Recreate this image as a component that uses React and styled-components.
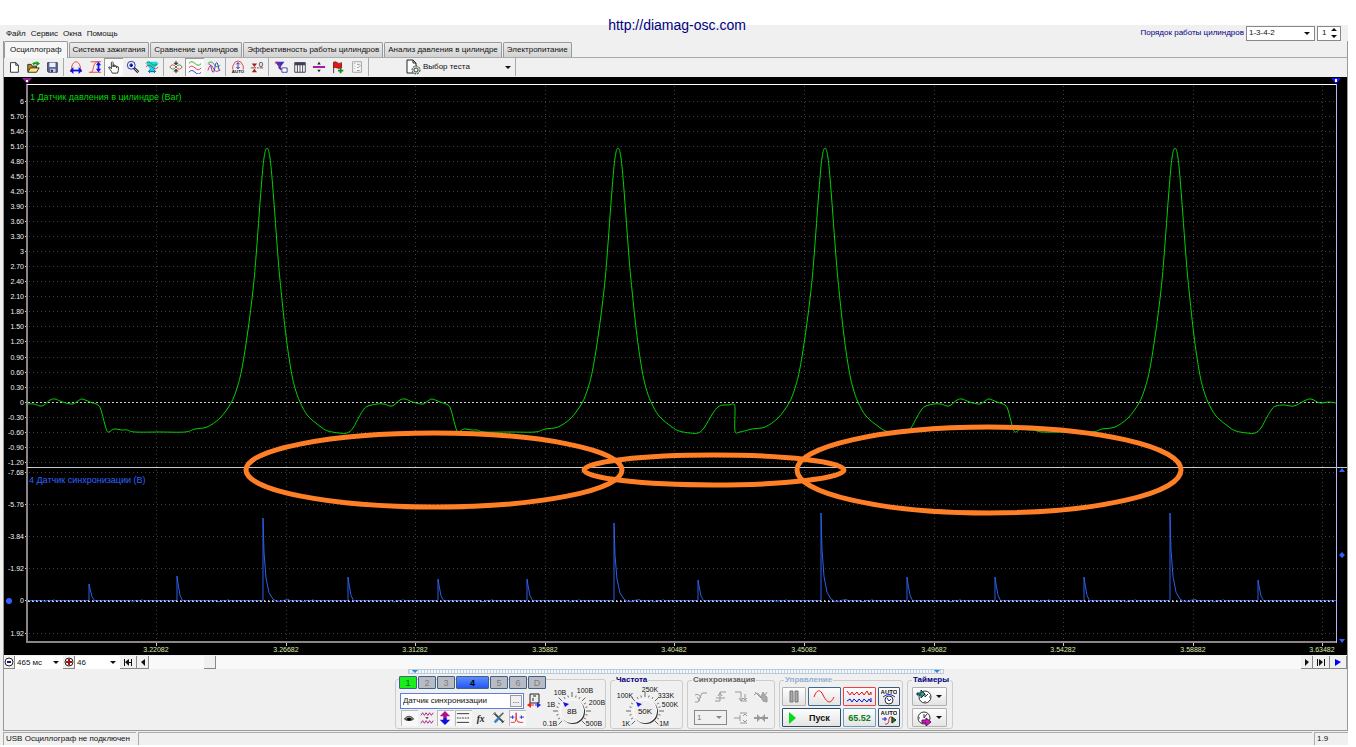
import React, { useState } from 'react';
import styled, { createGlobalStyle, css } from 'styled-components';

// Tabs, menu and axis data
const MENU = ['Файл', 'Сервис', 'Окна', 'Помощь'];

const TABS = [
  'Осциллограф',
  'Система зажигания',
  'Сравнение цилиндров',
  'Эффективность работы цилиндров',
  'Анализ давления в цилиндре',
  'Электропитание',
];

const TOOLS = [
  ['new', 'open', 'save'],
  ['fitX', 'fitY', 'hand', 'zoom', 'snap'],
  ['center', 'split', 'overlay'],
  ['auto', 'zero'],
  ['filter', 'table', 'divider', 'flag', 'report'],
];

const PRESSED = ['hand', 'split'];

const PRESSURE_AXIS = [
  '6', '5.70', '5.40', '5.10', '4.80', '4.50', '4.20', '3.90', '3.60', '3.30', '3', '2.70', '2.40',
  '2.10', '1.80', '1.50', '1.20', '0.90', '0.60', '0.30', '0', '-0.30', '-0.60', '-0.90', '-1.20',
];
const SYNC_AXIS = ['-7.68', '-5.76', '-3.84', '-1.92', '0', '1.92'];
const TIME_AXIS = [
  '3.22082', '3.26682', '3.31282', '3.35882', '3.40482',
  '3.45082', '3.49682', '3.54282', '3.58882', '3.63482',
];

const CHANNELS = ['1', '2', '3', '4', '5', '6', 'D'];
const CHANNEL_TOOLS = ['eye', 'noise', 'invert', 'lines', 'fx', 'tools', 'pulse'];
const CHANNEL_TOOLS_ON = ['eye', 'invert', 'lines', 'pulse'];

// Pressure wave: shape of one compression peak, relative to its top
const PEAK = [
  [-60, 427], [-47, 418], [-36, 403], [-30, 388], [-25, 368], [-19, 330], [-14, 290], [-11, 257],
  [-6, 190], [-3, 158], [0, 148], [3, 158], [6, 190], [11, 257], [14, 290], [19, 336], [24, 370],
  [28, 388], [33, 402], [41, 416], [54, 427], [61, 431], [72, 433], [80, 433], [86, 428], [92, 417],
  [97, 409], [101, 406],
];

// Open valve plateau and the drop after it
const PLATEAU = [
  [27, 404], [34, 404], [40, 406], [44, 405], [50, 400], [55, 399], [60, 401], [66, 403], [73, 404],
  [78, 401], [82, 399], [90, 402], [98, 405], [101, 410], [105, 425], [107, 431], [109, 432],
  [114, 429], [122, 430], [127, 430], [135, 432], [160, 432], [185, 432], [195, 429],
];

const shift = (points, dx) => points.map(([x, y]) => [x + dx, y]);

const PRESSURE = [
  ...PLATEAU,
  ...shift(PEAK, 267),
  ...shift(PLATEAU, 350),
  ...shift(PEAK.slice(0, 25), 618),
  [713, 413], [718, 407], [723, 405], [729, 405], [733, 404], [735, 408], [735, 431], [740, 432], [752, 429],
  ...shift(PEAK, 825),
  ...shift(PLATEAU, 907),
  ...shift(PEAK, 1175),
  [1284, 405], [1294, 406], [1304, 401], [1311, 399], [1320, 403], [1328, 402], [1336, 403],
];

// Catmull-Rom spline through the points
const smooth = (pts) =>
  pts.slice(0, -1).reduce((d, p, i) => {
    const prev = pts[i - 1] || p;
    const next = pts[i + 1];
    const after = pts[i + 2] || next;
    const c1 = [p[0] + (next[0] - prev[0]) / 6, p[1] + (next[1] - prev[1]) / 6];
    const c2 = [next[0] - (after[0] - p[0]) / 6, next[1] - (after[1] - p[1]) / 6];
    return `${d} C${c1} ${c2} ${next}`;
  }, `M${pts[0]}`);

// Ignition pulses: [x, top]
const PULSES = [
  [89, 584], [177, 576], [263, 518], [348, 577], [438, 579], [527, 579], [614, 523],
  [698, 580], [821, 513], [907, 577], [995, 577], [1084, 577], [1170, 513], [1258, 580],
];

const syncPath = () => {
  let d = 'M27 600.5';
  PULSES.forEach(([x, top]) => {
    const h = 600 - top;
    d += ` H${x - 46} l2 1.5 l2 -1.5 h6 l1 -1 l1 1 H${x} V${top}`;
    if (h > 50) {
      d += ` l1 ${h * 0.42} l2 ${h * 0.31} l3 ${h * 0.18} l4 ${h * 0.08} q3 3 8 2 q4 -1.5 8 -1.5 V600.5`;
    } else {
      d += ` l1 ${h * 0.3} l2 ${h * 0.5} l2 ${h * 0.18} V600.5`;
    }
  });
  return `${d} H1336`;
};

// Toolbar and panel drawings on a 16px grid
const ICONS = {
  new: <path d="M4 3h6l3 3v8H4zM10 3v3h3" fill="#fff" stroke="#222" />,
  open: (
    <>
      <path d="M2 13V5h4l1 2h5v6z" fill="#b98b1e" stroke="#222" />
      <path d="M2 14l3-5h10l-3 5z" fill="#ffe680" stroke="#222" />
      <path d="M7 4q3-3 5-1V1l4 3-4 3V5q-2-1-3 1z" fill="#10a010" />
    </>
  ),
  save: (
    <>
      <path d="M3 3h11v11H4l-1-1z" fill="#5a6a9c" stroke="#222e55" />
      <path d="M5 3h7v5H5z" fill="#eef" />
      <path d="M6 10h6v4H6z" fill="#ccd" />
      <path d="M7 11h2v3H7z" fill="#223" />
    </>
  ),
  fitX: (
    <>
      <path d="M1 13h2V8C4 4 6 2 8 2s4 2 5 6v5h2" fill="none" stroke="#e33" />
      <path d="M3 12h10" stroke="#11d" strokeWidth="2" />
      <path d="M5 8v8l-4-4zM11 8v8l4-4z" fill="#11d" />
    </>
  ),
  fitY: (
    <>
      <path d="M1 14h3C7 12 5 2 12 2M3 2h12M3 14h12" fill="none" stroke="#e33" />
      <path d="M12 5v6" stroke="#11d" strokeWidth="2" />
      <path d="M9 6h6l-3-4zM9 10h6l-3 4z" fill="#11d" />
    </>
  ),
  hand: (
    <path
      d="M6 15C5 12 2 10 2 8q1-1 3 2V3q1-2 2 0v5V6q1-1 2 0v2-1q1-1 2 0v2-1q1-1 2 0v4l-1 3z"
      fill="#fff"
      stroke="#222"
    />
  ),
  zoom: (
    <>
      <circle cx="6" cy="6" r="4.5" fill="#dff2ff" stroke="#227" />
      <path d="M6 4v4M4 6h4" stroke="#11a" strokeWidth="2" />
      <path d="M9 9l5 5" stroke="#227" strokeWidth="3" />
      <path d="M10 10l4 4" stroke="#e5d04a" />
    </>
  ),
  snap: (
    <>
      <path d="M2 2h12v4l-3 3H5L2 6zM5 9h6v5H5z" fill="#13dbe4" />
      <path d="M1 4q3-4 6 0t8 0" fill="none" stroke="#168a30" />
      <path d="M1 8q3-4 7 0t7 0" fill="none" stroke="#c33" />
      <path d="M4 13h8M6 11l-2 2 2 2M10 11l2 2-2 2" fill="none" stroke="#159" />
    </>
  ),
  center: (
    <>
      <path d="M1 8q3-5 7 0t7 0" fill="none" stroke="#d33" />
      <path d="M1 8q3 5 7 0t7 0" fill="none" stroke="#283" />
      <path d="M8 1v3M8 12v3" stroke="#222" />
      <path d="M5 3h6L8 6zM5 13h6l-3-3z" fill="#333" />
    </>
  ),
  split: (
    <>
      <path d="M1 4q3-4 7 0t7 0" fill="none" stroke="#1a1" />
      <path d="M1 9q3-4 7 0t7 0" fill="none" stroke="#e22" />
      <path d="M1 14q3-4 7 0t7 0" fill="none" stroke="#22d" />
    </>
  ),
  overlay: (
    <>
      <path d="M1 4q4-4 7 1t7 1" fill="none" stroke="#1a1" />
      <path d="M1 12q3-10 6-3t8 2" fill="none" stroke="#e22" />
      <path d="M2 5c3-2 3 9 5 9S9 3 11 3s2 10 4 9" fill="none" stroke="#22d" />
    </>
  ),
  auto: (
    <>
      <path d="M2 11V7q2-6 6-6t6 6v4" fill="none" stroke="#d33" />
      <path d="M8 3v7M6 5l2-2 2 2M6 8l2 2 2-2" fill="none" stroke="#22a" />
      <text x="8" y="15" fontSize="5" fontWeight="700" textAnchor="middle" fill="#111">AUTO</text>
    </>
  ),
  zero: (
    <>
      <path d="M2 4h6L5 8zM2 14h6l-3-4z" fill="#922" />
      <path d="M1 9h14" stroke="#922" strokeDasharray="6 1 2 1" />
      <text x="10" y="8" fontSize="9" fill="#222">0</text>
    </>
  ),
  filter: (
    <>
      <path d="M1 2h11L8 7v5L5 9V7z" fill="#33c" />
      <path d="M1 4q3-4 5 2t6 6" fill="none" stroke="#e22" />
      <path d="M9 9h6v5H9z" fill="#fff" stroke="#33a" />
    </>
  ),
  table: (
    <>
      <path d="M2 3h12v11H2z" fill="#fff" stroke="#334" />
      <path d="M2 3h12v3H2z" fill="#446" />
      <path d="M5 3v11M8 3v11M11 3v11" stroke="#334" />
    </>
  ),
  divider: (
    <>
      <path d="M1 8h14" stroke="#909" strokeWidth="2" />
      <path d="M6 5h4L8 2zM6 11h4l-2 3z" fill="#222" />
    </>
  ),
  flag: (
    <>
      <path d="M3 2v13" stroke="#333" />
      <path d="M3 3q2-2 4 0t5 0v6q-3 1-5 0t-4 0z" fill="#e11" stroke="#722" />
      <path d="M11 9v6M8 12h6" stroke="#1a8a1a" strokeWidth="2" />
    </>
  ),
  report: (
    <>
      <path d="M3 2h10v12H3z" fill="#f8f8f8" stroke="#999" />
      <path d="M5 4h1M5 7h1M5 10h1M8 5h3M8 8l1 1 3-3M8 12h3" fill="none" stroke="#888" />
    </>
  ),
  test: (
    <>
      <path d="M2 1h6l3 3v10H2z" fill="#fff" stroke="#222" />
      <path d="M8 1v3h3" fill="none" stroke="#222" />
      <circle cx="11" cy="11" r="4" fill="#cfd8c8" stroke="#344" strokeDasharray="2 1" />
      <circle cx="11" cy="11" r="2" fill="#fff" stroke="#344" />
    </>
  ),
  eye: (
    <>
      <path d="M2 9q6-7 12 0-6 5-12 0z" fill="#444" />
      <circle cx="8" cy="9" r="2" fill="#000" />
      <path d="M4 9q4-4 8 0" fill="none" stroke="#bbb" />
    </>
  ),
  noise: (
    <>
      <path d="M1 5l2-3 2 3 2-3 2 3 2-3 2 3 2-3" fill="none" stroke="#a1147f" />
      <path d="M1 14l2-3 2 3 2-3 2 3 2-3 2 3 2-3" fill="none" stroke="#a1147f" />
      <path d="M6 7h4l-2 2z" fill="#222" />
    </>
  ),
  invert: (
    <>
      <path d="M8 0l6 6h-4v2H6V6H2z" fill="#b01090" />
      <path d="M8 16l6-6h-4V8H6v2H2z" fill="#11d" />
    </>
  ),
  lines: (
    <>
      <path d="M1 3h14M1 13h14" stroke="#222" />
      <path d="M1 8h14" stroke="#222" strokeDasharray="2 1" />
    </>
  ),
  fx: (
    <text x="3" y="12" fontSize="11" fontStyle="italic" fontWeight="700" fontFamily="Liberation Serif, serif" fill="#222">
      fx
    </text>
  ),
  tools: (
    <>
      <path d="M3 3l10 10" stroke="#444" strokeWidth="2" />
      <path d="M13 2l-5 5" stroke="#666" strokeWidth="2" />
      <path d="M8 8l-5 5" stroke="#38c" strokeWidth="3" />
      <path d="M1 4l3-3M11 14l3-3" stroke="#444" />
    </>
  ),
  pulse: (
    <>
      <path d="M1 13h4q2 0 2-11 0 11 3 11 0-2 1 0h4" fill="none" stroke="#e22" />
      <path d="M0 7h5M11 7h5M3 5v4M13 5v4" stroke="#22d" />
    </>
  ),
  probe: (
    <>
      <path d="M4 1h9v9H4z" fill="#eee" stroke="#222" />
      <path d="M7 3h3M7 5v3" stroke="#222" />
      <path d="M5 9v6l-4-3z" fill="#e22" />
      <path d="M11 9v6l4-3z" fill="#22d" />
      <path d="M4 12h4" stroke="#e22" />
      <path d="M9 12h3" stroke="#22d" />
    </>
  ),
  edge1: <path d="M2 13h3L9 4h5M2 6q4-2 6 3M4 8l3 4" fill="none" stroke="#999" />,
  edge2: <path d="M2 12h5V3h6M5 7l2-3 2 3M3 9h9" fill="none" stroke="#999" />,
  edge3: <path d="M2 3h6v9h6M6 9l2 3 2-3M12 5v6M10 9l2 2 2-2" fill="none" stroke="#999" />,
  edge4: (
    <>
      <path d="M1 6q4-4 6 1t7-4M2 3l6 6" fill="none" stroke="#999" />
      <path d="M8 8l2-5 2 4 2 1v5l-4-1z" fill="#aaa" stroke="#999" />
    </>
  ),
  level: <path d="M1 8h6M7 3h7M7 13h7M7 5v6M10 6l2-2 2 2M10 10l2 2 2-2" fill="none" stroke="#999" />,
  sides: (
    <>
      <path d="M1 8h14" stroke="#999" strokeWidth="2" />
      <path d="M4 4l4 4-4 4zM12 4L8 8l4 4z" fill="#999" />
    </>
  ),
  autoDial: (
    <>
      <text x="8" y="5" fontSize="6" fontWeight="700" textAnchor="middle" fill="#111">AUTO</text>
      <circle cx="8" cy="11" r="4" fill="#fff" stroke="#333" />
      <path d="M2 8q6-5 12 0M6 9l2 3 2-2" fill="none" stroke="#22c" />
    </>
  ),
  autoSync: (
    <>
      <text x="8" y="5" fontSize="6" fontWeight="700" textAnchor="middle" fill="#111">AUTO</text>
      <path d="M4 14q4 1 4-5 0-3 3-2v6" fill="none" stroke="#c33" />
      <path d="M1 9h5M4 7v4" stroke="#22c" />
      <path d="M11 7l4 3-4 3z" fill="#181" stroke="#222" />
    </>
  ),
  timerIn: (
    <>
      <circle cx="9" cy="8" r="6" fill="#fff" stroke="#333" />
      <path d="M9 8l3-3M9 8V5M13 8h1M9 12v1" stroke="#333" />
      <path d="M1 4h4V1l4 4-4 4V6H1z" fill="#2aa08a" stroke="#134" />
    </>
  ),
  timerOut: (
    <>
      <circle cx="8" cy="8" r="6" fill="#fff" stroke="#333" />
      <path d="M8 8l3-4M8 8V4M3 8h1" stroke="#333" />
      <path d="M6 10h4V8l5 4-5 4v-3H6z" fill="#d018c0" stroke="#515" />
    </>
  ),
};

const Icon = ({ name, size = 16 }) => (
  <svg width={size} height={size} viewBox="0 0 16 16" aria-hidden="true">
    {ICONS[name]}
  </svg>
);

// Oscilloscope screen
const Plot = () => {
  const rowY = (i) => Math.round(101 + i * 15.03);
  const syncY = (i) => Math.round(472 + i * 32.1);
  const colX = (i) => Math.round(156 + i * 129.6);

  return (
    <Screen viewBox="4 77 1343 578" role="img" aria-label="Осциллограмма">
      <rect x="4" y="77" width="1343" height="578" fill="#000" />

      {/* Grid */}
      <g stroke="#404040" strokeDasharray="1 3" shapeRendering="crispEdges">
        {PRESSURE_AXIS.map((v, i) => (
          <path key={v} d={`M29 ${rowY(i) + 0.5}H1335`} />
        ))}
        {SYNC_AXIS.map((v, i) => (
          <path key={v} d={`M29 ${syncY(i) + 0.5}H1335`} />
        ))}
        {TIME_AXIS.map((v, i) => (
          <path key={v} d={`M${colX(i) + 0.5} 86V642`} />
        ))}
      </g>
      <path d="M28 402.5H1335M28 601.5H1335" stroke="#ccc" strokeDasharray="2 2" shapeRendering="crispEdges" />

      {/* Axis labels */}
      <g fontSize="7" fill="#f0f0f0" textAnchor="end">
        {PRESSURE_AXIS.map((v, i) => (
          <text key={v} x="24" y={rowY(i) + 3}>{v}</text>
        ))}
        {SYNC_AXIS.map((v, i) => (
          <text key={v} x="24" y={syncY(i) + 3}>{v}</text>
        ))}
      </g>
      <g fontSize="7" fill="#dfe8b0" textAnchor="middle">
        {TIME_AXIS.map((v, i) => (
          <text key={v} x={colX(i)} y="652">{v}</text>
        ))}
      </g>
      <g stroke="#ccc" shapeRendering="crispEdges">
        {PRESSURE_AXIS.map((v, i) => (
          <path key={v} d={`M25 ${rowY(i) + 0.5}h3`} />
        ))}
        {SYNC_AXIS.map((v, i) => (
          <path key={v} d={`M25 ${syncY(i) + 0.5}h3`} />
        ))}
        {TIME_AXIS.map((v, i) => (
          <path key={v} d={`M${colX(i) + 0.5} 643v3`} />
        ))}
      </g>

      {/* Frame */}
      <path d="M27 84V642H1336" fill="none" stroke="#8a8488" strokeWidth="2" />
      <path d="M27 84.5H1336" stroke="#fff" />
      <path d="M27 467.5H1347" stroke="#c8c8c8" />
      <path d="M1336.5 84V643" stroke="#b9b0ff" />
      <path d="M22 78h10l-5 6z" fill="#8a2090" />
      <path d="M26 80h2v2h-2z" fill="#fff" />
      <path d="M1331 78h10l-5 6z" fill="#1414ff" />
      <path d="M1335 79h2v3h-2z" fill="#fff" />
      <circle cx="9" cy="601" r="3" fill="#2f63ff" />
      <path d="M1339 472h6l-3-4zM1339 639h6l-3 4zM1339 555l3-3 3 3-3 3z" fill="#2f63ff" />

      {/* Signals */}
      <path d={syncPath()} fill="none" stroke="#2d5fe8" />
      <path d="M28 600.5H1335" stroke="#9db8ff" strokeDasharray="1 3" shapeRendering="crispEdges" />
      <path d={smooth(PRESSURE)} fill="none" stroke="#00d400" />
      <text x="30" y="100" fontSize="9" fill="#00d800">1 Датчик давления в цилиндре (Bar)</text>
      <text x="29" y="483" fontSize="9" fill="#2f63ff">4 Датчик синхронизации (В)</text>

      {/* Highlighted intervals */}
      <g fill="none" stroke="#ff7f27" strokeWidth="5">
        <ellipse cx="434" cy="470" rx="188" ry="37" />
        <ellipse cx="714" cy="470" rx="130" ry="15" />
        <ellipse cx="989" cy="470" rx="192" ry="43" />
      </g>
    </Screen>
  );
};

// Rotary knob with scale marks; labels are [text, x, y]
const Dial = ({ box, cx, cy, value, labels, name }) => {
  const [, , width, height] = box.split(' ');
  const marks = Array.from({ length: 19 }, (_, i) => ((135 + i * 15) * Math.PI) / 180);
  return (
    <DialSvg width={width} height={height} viewBox={box} role="img" aria-label={name}>
      <g stroke="#666">
        {marks.map((a, i) => {
          const end = i % 3 ? 16 : 19;
          return (
            <path
              key={a}
              d={`M${cx + Math.cos(a) * 14} ${cy + Math.sin(a) * 14}L${cx + Math.cos(a) * end} ${cy + Math.sin(a) * end}`}
            />
          );
        })}
      </g>
      <circle cx={cx + 1} cy={cy + 1} r="12" fill="#333" />
      <circle cx={cx} cy={cy} r="12" fill="#fff" />
      <circle cx={cx} cy={cy} r="11" fill="#eee" />
      <path d={`M${cx - 9} ${cy - 9}l6 2-4 3z`} fill="#11e" />
      <text x={cx} y={cy + 3} fontSize="8" textAnchor="middle" fill="#111">{value}</text>
      {labels.map(([text, x, y]) => (
        <text key={text} x={x} y={y + 3} fontSize="7" textAnchor="middle" fill="#111">{text}</text>
      ))}
    </DialSvg>
  );
};

const App = () => {
  const [tab, setTab] = useState(0);
  const [channel, setChannel] = useState('4');

  return (
    <>
      <GlobalStyle />
      <SiteBar>
        <a href="http://diamag-osc.com">http://diamag-osc.com</a>
      </SiteBar>
      <Window>
        <MenuBar>
          <nav>
            {MENU.map((item) => (
              <button key={item} type="button">{item}</button>
            ))}
          </nav>
          <FiringOrder>
            <label htmlFor="order">Порядок работы цилиндров</label>
            <SelectBox $width={69} $border>
              <select id="order" defaultValue="1-3-4-2">
                <option>1-3-4-2</option>
              </select>
            </SelectBox>
            <Spinner>
              <input type="number" defaultValue="1" aria-label="Номер цилиндра" />
              <svg width="8" height="12" viewBox="0 0 8 12" aria-hidden="true">
                <path d="M1 4h6L4 1zM1 8h6l-3 3z" fill="#111" />
              </svg>
            </Spinner>
          </FiringOrder>
        </MenuBar>

        <Body>
          <TabBar role="tablist">
            {TABS.map((title, i) => (
              <Tab key={title} type="button" role="tab" aria-selected={i === tab} $active={i === tab} onClick={() => setTab(i)}>
                {title}
              </Tab>
            ))}
          </TabBar>

          <ToolBar>
            {TOOLS.map((group) => (
              <ToolGroup key={group[0]}>
                {group.map((name) => (
                  <ToolButton key={name} type="button" aria-label={name} $pressed={PRESSED.includes(name)}>
                    <Icon name={name} size={14} />
                  </ToolButton>
                ))}
              </ToolGroup>
            ))}
            <TestPicker type="button">
              <Icon name="test" />
              <span>Выбор теста</span>
              <Caret />
            </TestPicker>
          </ToolBar>

          <Plot />

          {/* Time scale and scrolling */}
          <ScrollRow>
            <FlatButton type="button" aria-label="Сжать" $width={11}>
              <svg width="10" height="10" viewBox="0 0 10 10">
                <circle cx="5" cy="5" r="4" fill="#fff" stroke="#222" />
                <path d="M3 5h4" stroke="#118" strokeWidth="2" />
              </svg>
            </FlatButton>
            <SelectBox $width={48}>
              <select aria-label="Развертка" defaultValue="465 мс">
                <option>465 мс</option>
              </select>
            </SelectBox>
            <FlatButton type="button" aria-label="Растянуть" $width={12}>
              <svg width="10" height="10" viewBox="0 0 10 10">
                <circle cx="5" cy="5" r="4" fill="#fff" stroke="#222" />
                <path d="M2 5h6M5 2v6" stroke="#a11" strokeWidth="2" />
              </svg>
            </FlatButton>
            <SelectBox $width={45}>
              <select aria-label="Масштаб" defaultValue="46">
                <option>46</option>
              </select>
            </SelectBox>
            <FlatButton type="button" aria-label="В начало" $width={17}>
              <svg width="8" height="7" viewBox="0 0 8 7"><path d="M0 0h1v7H0zM5 0v7L1 3zM5 3h2v1H5zM7 0h1v7H7z" fill="#111" /></svg>
            </FlatButton>
            <FlatButton type="button" aria-label="Назад" $width={12}>
              <svg width="4" height="7" viewBox="0 0 4 7"><path d="M4 0v7L0 3z" fill="#111" /></svg>
            </FlatButton>
            <TimeSlider type="range" min="0" max="1139" defaultValue="55" aria-label="Положение" />
            <FlatButton type="button" aria-label="Вперед" $width={12}>
              <svg width="4" height="7" viewBox="0 0 4 7"><path d="M0 0v7l4-4z" fill="#111" /></svg>
            </FlatButton>
            <FlatButton type="button" aria-label="В конец" $width={17}>
              <svg width="8" height="7" viewBox="0 0 8 7"><path d="M0 0h1v7H0zM2 0v7l4-4zM7 0h1v7H7z" fill="#111" /></svg>
            </FlatButton>
            <FlatButton type="button" aria-label="Следить" $width={17}>
              <svg width="7" height="7" viewBox="0 0 7 7"><path d="M0 0v7l6-4z" fill="#00f" /></svg>
            </FlatButton>
          </ScrollRow>

          <Splitter>
            <Caret $blue />
            <Caret $blue />
          </Splitter>

          <Controls>
            <ChannelPanel>
              <ChannelColumn>
                <ChannelRow>
                  {CHANNELS.map((c) => (
                    <ChannelButton key={c} type="button" $on={c === '1'} $current={c === channel} onClick={() => setChannel(c)}>
                      {c}
                    </ChannelButton>
                  ))}
                </ChannelRow>
                <NameRow>
                  <NameField>
                    <input type="text" defaultValue="Датчик синхронизации" aria-label="Датчик" />
                    <button type="button">...</button>
                  </NameField>
                  <Icon name="probe" />
                </NameRow>
                <ChannelTools>
                  {CHANNEL_TOOLS.map((name) => (
                    <ChannelTool key={name} type="button" aria-label={name} $on={CHANNEL_TOOLS_ON.includes(name)}>
                      <Icon name={name} size={14} />
                    </ChannelTool>
                  ))}
                </ChannelTools>
              </ChannelColumn>
              <Dial
                box="547 680 59 46"
                cx={573}
                cy={711}
                value="8В"
                name="Чувствительность"
                labels={[['10В', 561, 692], ['100В', 586, 690], ['1В', 552, 704], ['200В', 598, 702], ['0.1В', 551, 723], ['500В', 595, 723]]}
              />
            </ChannelPanel>

            <Group $color="#000080">
              <legend>Частота</legend>
              <Dial
                box="614 687 67 40"
                cx={646}
                cy={711}
                value="50K"
                name="Частота"
                labels={[['250K', 651, 689], ['100K', 626, 695], ['333K', 667, 695], ['500K', 671, 704], ['1K', 627, 723], ['1M', 665, 723]]}
              />
            </Group>

            <Group $color="#606060">
              <legend>Синхронизация</legend>
              <SyncGrid>
                {['edge1', 'edge2', 'edge3', 'edge4'].map((name) => (
                  <SyncButton key={name} type="button" disabled aria-label={name}>
                    <Icon name={name} />
                  </SyncButton>
                ))}
                <SyncSelect>
                  <SelectBox $width={33} $border $disabled>
                    <select disabled aria-label="Канал синхронизации" defaultValue="1">
                      <option>1</option>
                    </select>
                  </SelectBox>
                </SyncSelect>
                {['level', 'sides'].map((name) => (
                  <SyncButton key={name} type="button" disabled aria-label={name}>
                    <Icon name={name} />
                  </SyncButton>
                ))}
              </SyncGrid>
            </Group>

            <Group $color="#8fb0d0">
              <legend>Управление</legend>
              <ControlGrid>
                <ControlButton type="button" disabled aria-label="Пауза">
                  <svg width="10" height="13" viewBox="0 0 10 13"><path d="M1 1h3v11H1zM6 1h3v11H6z" fill="#aaa" stroke="#777" /></svg>
                </ControlButton>
                <ControlButton type="button" aria-label="Синус" $line="#3b6b96">
                  <svg width="22" height="15" viewBox="0 0 22 15"><path d="M1 8C4 0 7 0 10 6S17 17 21 8" fill="none" stroke="#e11" /></svg>
                </ControlButton>
                <ControlButton type="button" aria-label="Каналы" $line="#ee4040">
                  <svg width="26" height="14" viewBox="0 0 26 14">
                    <path d="M1 1l3 4 2-3 2 3 3-3 2 3 3-3 2 3 3-4 2 4 2-3v3" fill="none" stroke="#e11" />
                    <path d="M1 11l3-2 2 3 2-3 3 3 2-3 3 3 2-3 3 3 2-3 2 3V8" fill="none" stroke="#11d" />
                  </svg>
                </ControlButton>
                <ControlButton type="button" aria-label="Авто шкала" $line="#3b5b7c">
                  <Icon name="autoDial" />
                </ControlButton>
                <StartButton type="button" $line="#2c4c6c">
                  <svg width="8" height="12" viewBox="0 0 8 12"><path d="M0 0l7 6-7 6z" fill="#0d1" /></svg>
                  <span>Пуск</span>
                </StartButton>
                <RateButton type="button" $line="#6d9cc0">65.52</RateButton>
                <ControlButton type="button" aria-label="Авто синхронизация" $line="#3b5b7c">
                  <Icon name="autoSync" />
                </ControlButton>
              </ControlGrid>
            </Group>

            <Group $color="#000080">
              <legend>Таймеры</legend>
              <TimerColumn>
                <ControlButton type="button" aria-label="Таймер запуска">
                  <Icon name="timerIn" />
                  <Caret />
                </ControlButton>
                <ControlButton type="button" aria-label="Таймер остановки">
                  <Icon name="timerOut" />
                  <Caret />
                </ControlButton>
              </TimerColumn>
            </Group>
          </Controls>
        </Body>

        <StatusBar>
          <StatusCell $width={133}>USB Осциллограф не подключен</StatusCell>
          <StatusCell />
          <StatusCell $width={34}>1.9</StatusCell>
        </StatusBar>
      </Window>
    </>
  );
};

// Styled components

const GlobalStyle = createGlobalStyle`
  * {
    box-sizing: border-box;
  }

  body {
    margin: 0;
    background: #fff;
    color: #111;
    font: 8px/10px "Liberation Sans", Arial, sans-serif;
  }

  button,
  input,
  select {
    margin: 0;
    padding: 0;
    border: 0;
    border-radius: 0;
    background: none;
    color: inherit;
    font: inherit;
  }

  svg {
    display: block;
    flex: none;
    font-family: "Liberation Sans", Arial, sans-serif;
  }
`;

const SiteBar = styled.header`
  display: flex;
  justify-content: center;
  height: 25px;
  padding-right: 2px;

  a {
    position: relative;
    z-index: 1;
    margin-top: 17px;
    color: #000080;
    font-size: 14px;
    line-height: 16px;
    text-decoration: none;
  }
`;

const Window = styled.main`
  margin-right: 8px;
  background: #f0f0f0;
`;

const MenuBar = styled.div`
  display: flex;
  justify-content: space-between;
  height: 16px;
  padding: 0 7px 0 6px;

  nav {
    display: flex;
    align-items: center;
    gap: 5px;
    padding-top: 2px;
  }
`;

const FiringOrder = styled.div`
  display: flex;
  align-items: center;
  gap: 2px;
  color: #000080;
`;

const SelectBox = styled.div`
  display: grid;
  align-items: center;
  width: ${(p) => p.$width}px;
  height: ${(p) => (p.$border ? 15 : 13)}px;
  background: ${(p) => (p.$disabled ? '#f0f0f0' : '#fff')};
  border: ${(p) => (p.$border ? '1px solid #888' : '0')};
  color: ${(p) => (p.$disabled ? '#777' : '#111')};

  select {
    grid-area: 1 / 1;
    width: 100%;
    padding-left: 2px;
    appearance: none;
    opacity: 1;
  }

  &::after {
    content: '';
    grid-area: 1 / 1;
    justify-self: end;
    margin-right: 4px;
    border: 3px solid transparent;
    border-top-color: ${(p) => (p.$disabled ? '#888' : '#111')};
    border-bottom: 0;
    pointer-events: none;
  }
`;

const Spinner = styled.div`
  display: flex;
  align-items: center;
  width: 24px;
  height: 15px;
  padding: 0 2px 0 4px;
  background: #fff;
  border: 1px solid #888;
  color: #111;

  input {
    flex: 1;
    min-width: 0;
    appearance: textfield;
  }

  input::-webkit-inner-spin-button {
    display: none;
  }
`;

const Body = styled.section`
  margin-left: 3px;
  border: solid #999;
  border-width: 0 1px 1px;
`;

const TabBar = styled.div`
  display: flex;
  align-items: flex-end;
  gap: 1px;
  height: 17px;
  border-bottom: 1px solid #aaa;
`;

const Tab = styled.button`
  height: 15px;
  padding: 0 3px;
  background: linear-gradient(#ededed, #d2d2d2);
  border: 1px solid #999;
  border-bottom: 0;
  border-radius: 2px 2px 0 0;

  ${(p) =>
    p.$active &&
    css`
      height: 17px;
      margin-bottom: -1px;
      padding: 0 5px;
      background: #f6f6f6;
    `}
`;

const ToolBar = styled.div`
  display: flex;
  align-items: center;
  height: 19px;
  padding-bottom: 1px;
`;

const ToolGroup = styled.div`
  display: flex;
  padding-right: 2px;
  margin-right: 2px;
  border-right: 1px solid #aaa;
`;

const ToolButton = styled.button`
  display: grid;
  place-items: center;
  width: 19px;
  height: 18px;
  background: ${(p) => (p.$pressed ? '#fafafa' : 'none')};
  box-shadow: ${(p) => (p.$pressed ? 'inset 1px 1px #999' : 'none')};
`;

const TestPicker = styled.button`
  display: flex;
  align-items: center;
  gap: 2px;
  width: 145px;
  height: 18px;
  padding: 0 4px 0 34px;
  border-right: 1px solid #aaa;

  span {
    flex: 1;
    text-align: left;
  }
`;

const Caret = styled.i`
  border: 3px solid transparent;
  border-top-color: ${(p) => (p.$blue ? '#2a8ad8' : '#111')};
  border-bottom: 0;
`;

const Screen = styled.svg`
  width: 100%;
  height: auto;
`;

const ScrollRow = styled.div`
  display: flex;
  height: 13px;
  margin-top: 1px;
`;

const FlatButton = styled.button`
  display: grid;
  place-items: center;
  width: ${(p) => p.$width}px;
  background: #f0f0f0;
  border: solid;
  border-width: 0 1px 1px 0;
  border-color: #888;
`;

const TimeSlider = styled.input`
  flex: 1;
  min-width: 0;
  height: 13px;
  appearance: none;
  background: #f9f9f9;

  &::-webkit-slider-thumb {
    appearance: none;
    width: 12px;
    height: 13px;
    background: #f0f0f0;
    border: solid #888;
    border-width: 0 1px 1px 0;
  }
`;

const Splitter = styled.div`
  display: flex;
  justify-content: space-between;
  align-items: center;
  width: 536px;
  max-width: 100%;
  height: 5px;
  margin: 0 auto;
  padding: 0 3px;
  background: repeating-linear-gradient(90deg, #b5d6ee 0 1px, #f4f8fc 1px 3px);
  border: 1px solid #c0c8d0;
`;

const Controls = styled.div`
  display: flex;
  justify-content: center;
  gap: 4px;
  padding: 1px 3px 1px 0;
`;

const panel = css`
  min-width: 0;
  margin: 0;
  border: 1px solid #ccc;
  border-radius: 3px;
`;

const Group = styled.fieldset`
  ${panel}
  padding: 2px 2px 1px;

  legend {
    margin-left: 2px;
    padding: 0 1px;
    color: ${(p) => p.$color};
    font-weight: 700;
  }
`;

const ChannelPanel = styled.div`
  ${panel}
  display: flex;
  margin-top: 4px;
  padding: 0 0 2px 3px;
`;

const ChannelColumn = styled.div`
  margin-top: -4px;
`;

const ChannelRow = styled.div`
  display: flex;
  gap: 1px;
`;

const ChannelButton = styled.button`
  width: 18px;
  height: 13px;
  background: #b8bcc2;
  border: 1px solid #3d6288;
  border-radius: 1px;
  color: #7a7e84;
  font-size: 9px;

  ${(p) =>
    p.$on &&
    css`
      background: #18ee18;
      color: #063;
    `}

  ${(p) =>
    p.$current &&
    css`
      width: 33px;
      background: linear-gradient(#5c8cff, #2558f0);
      color: #000;
      font-weight: 700;
    `}
`;

const NameRow = styled.div`
  display: flex;
  gap: 2px;
  margin: 4px 0 1px 1px;
`;

const NameField = styled.div`
  display: flex;
  width: 124px;
  height: 16px;
  padding: 1px;
  background: #fff;
  border: 1px solid #5a80d8;

  input {
    flex: 1;
    min-width: 0;
    padding-left: 1px;
  }

  button {
    width: 12px;
    background: #f0f0f0;
    border: 1px solid #999;
    line-height: 6px;
  }
`;

const ChannelTools = styled.div`
  display: flex;
  margin-left: 2px;
`;

const ChannelTool = styled.button`
  display: grid;
  place-items: center;
  width: 17px;
  height: 16px;
  margin-right: 1px;
  background: ${(p) => (p.$on ? '#f8f8f8' : 'none')};
  box-shadow: ${(p) => (p.$on ? 'inset 1px 1px #bbb' : 'none')};
`;

const DialSvg = styled.svg`
  overflow: visible;
`;

const SyncGrid = styled.div`
  display: grid;
  grid-template-columns: repeat(4, 20px);
  grid-auto-rows: 19px;
  gap: 2px 0;
  padding: 0 1px;
`;

const SyncSelect = styled.div`
  grid-column: span 2;
  padding: 2px 0 0 3px;
`;

const SyncButton = styled.button`
  display: grid;
  place-items: center;
`;

const ControlGrid = styled.div`
  display: grid;
  grid-template-columns: 24px 33px 33px 22px;
  grid-auto-rows: 19px;
  gap: 2px;
`;

const ControlButton = styled.button`
  display: flex;
  align-items: center;
  justify-content: center;
  gap: 4px;
  background: linear-gradient(#fdfdfd, #e4e4e4);
  border: 1px solid ${(p) => p.$line || '#b0b0b0'};
  border-radius: 1px;
`;

const StartButton = styled(ControlButton)`
  grid-column: span 2;
  justify-content: flex-start;
  gap: 12px;
  padding-left: 6px;
  font-size: 9px;
  font-weight: 700;
`;

const RateButton = styled(ControlButton)`
  color: #0a7a1a;
  font-size: 9px;
  font-weight: 700;
`;

const TimerColumn = styled.div`
  display: grid;
  grid-auto-rows: 19px;
  gap: 2px;
  padding: 0 2px;

  button {
    width: 35px;
  }
`;

const StatusBar = styled.footer`
  display: flex;
  gap: 2px;
  height: 13px;
  margin: 1px 0 0 3px;
`;

const StatusCell = styled.div`
  flex: ${(p) => (p.$width ? `0 0 ${p.$width}px` : '1')};
  padding: 1px 2px;
  border: solid #aaa;
  border-width: 1px 0 0 1px;
`;

export default App;
